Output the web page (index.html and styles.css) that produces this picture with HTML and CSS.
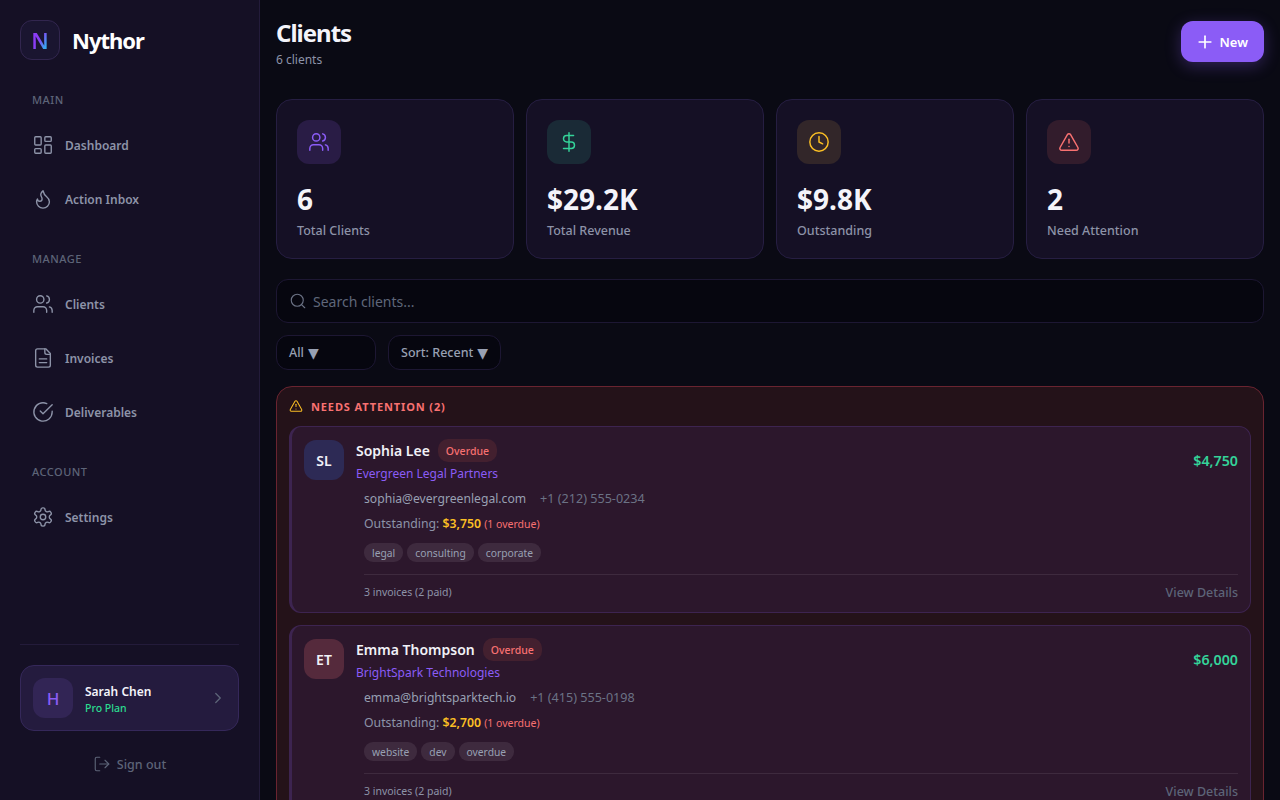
FILE: index.html
```html
<!DOCTYPE html>
<html lang="en">
<head>
    <meta charset="UTF-8">
    <meta name="viewport" content="width=device-width, initial-scale=1.0">
    <title>Nythor - Clients</title>
    <link rel="stylesheet" href="styles.css">
</head>
<body>
    <div class="app">
        <aside class="sidebar">
            <div class="brand">
                <div class="brand-mark"><span class="brand-letter">N</span></div>
                <span class="brand-name">Nythor</span>
            </div>

            <nav class="nav">
                <div class="nav-label">MAIN</div>
                <a href="#" class="nav-item">
                    <svg class="nav-icon" viewBox="0 0 24 24"><rect x="3" y="3" width="7" height="9" rx="1"/><rect x="14" y="3" width="7" height="5" rx="1"/><rect x="14" y="12" width="7" height="9" rx="1"/><rect x="3" y="16" width="7" height="5" rx="1"/></svg>
                    Dashboard
                </a>
                <a href="#" class="nav-item">
                    <svg class="nav-icon" viewBox="0 0 24 24"><path d="M8.5 14.5A2.5 2.5 0 0 0 11 12c0-1.38-.5-2-1-3-1.072-2.143-.224-4.054 2-6 .5 2.5 2 4.9 4 6.5 2 1.6 3 3.5 3 5.5a7 7 0 1 1-14 0c0-1.153.433-2.294 1-3a2.5 2.5 0 0 0 2.5 2.5z"/></svg>
                    Action Inbox
                </a>

                <div class="nav-label">MANAGE</div>
                <a href="#" class="nav-item">
                    <svg class="nav-icon" viewBox="0 0 24 24"><path d="M16 21v-2a4 4 0 0 0-4-4H6a4 4 0 0 0-4 4v2"/><circle cx="9" cy="7" r="4"/><path d="M22 21v-2a4 4 0 0 0-3-3.87"/><path d="M16 3.13a4 4 0 0 1 0 7.75"/></svg>
                    Clients
                </a>
                <a href="#" class="nav-item">
                    <svg class="nav-icon" viewBox="0 0 24 24"><path d="M15 2H6a2 2 0 0 0-2 2v16a2 2 0 0 0 2 2h12a2 2 0 0 0 2-2V7Z"/><path d="M14 2v4a2 2 0 0 0 2 2h4"/><path d="M16 13H8"/><path d="M16 17H8"/></svg>
                    Invoices
                </a>
                <a href="#" class="nav-item">
                    <svg class="nav-icon" viewBox="0 0 24 24"><path d="M22 11.08V12a10 10 0 1 1-5.93-9.14"/><path d="m9 11 3 3L22 4"/></svg>
                    Deliverables
                </a>

                <div class="nav-label">ACCOUNT</div>
                <a href="#" class="nav-item">
                    <svg class="nav-icon" viewBox="0 0 24 24"><path d="M12.22 2h-.44a2 2 0 0 0-2 2v.18a2 2 0 0 1-1 1.73l-.43.25a2 2 0 0 1-2 0l-.15-.08a2 2 0 0 0-2.73.73l-.22.38a2 2 0 0 0 .73 2.73l.15.1a2 2 0 0 1 1 1.72v.51a2 2 0 0 1-1 1.74l-.15.09a2 2 0 0 0-.73 2.73l.22.38a2 2 0 0 0 2.73.73l.15-.08a2 2 0 0 1 2 0l.43.25a2 2 0 0 1 1 1.73V20a2 2 0 0 0 2 2h.44a2 2 0 0 0 2-2v-.18a2 2 0 0 1 1-1.73l.43-.25a2 2 0 0 1 2 0l.15.08a2 2 0 0 0 2.73-.73l.22-.39a2 2 0 0 0-.73-2.73l-.15-.08a2 2 0 0 1-1-1.74v-.5a2 2 0 0 1 1-1.74l.15-.09a2 2 0 0 0 .73-2.73l-.22-.38a2 2 0 0 0-2.73-.73l-.15.08a2 2 0 0 1-2 0l-.43-.25a2 2 0 0 1-1-1.73V4a2 2 0 0 0-2-2z"/><circle cx="12" cy="12" r="3"/></svg>
                    Settings
                </a>
            </nav>

            <div class="sidebar-footer">
                <div class="user-card">
                    <div class="user-avatar">H</div>
                    <div class="user-info">
                        <div class="user-name">Sarah Chen</div>
                        <div class="user-plan">Pro Plan</div>
                    </div>
                    <svg class="user-chevron" viewBox="0 0 24 24"><path d="m9 18 6-6-6-6"/></svg>
                </div>
                <a href="#" class="sign-out">
                    <svg class="sign-out-icon" viewBox="0 0 24 24"><path d="M9 21H5a2 2 0 0 1-2-2V5a2 2 0 0 1 2-2h4"/><path d="m16 17 5-5-5-5"/><path d="M21 12H9"/></svg>
                    Sign out
                </a>
            </div>
        </aside>

        <main class="main">
            <div class="page-header">
                <div>
                    <h1>Clients</h1>
                    <p class="page-count">6 clients</p>
                </div>
                <button class="new-btn">
                    <svg class="new-icon" viewBox="0 0 24 24"><path d="M5 12h14"/><path d="M12 5v14"/></svg>
                    New
                </button>
            </div>

            <div class="stats">
                <div class="stat-card">
                    <div class="stat-icon purple"><svg viewBox="0 0 24 24"><path d="M16 21v-2a4 4 0 0 0-4-4H6a4 4 0 0 0-4 4v2"/><circle cx="9" cy="7" r="4"/><path d="M22 21v-2a4 4 0 0 0-3-3.87"/><path d="M16 3.13a4 4 0 0 1 0 7.75"/></svg></div>
                    <div class="stat-value">6</div>
                    <div class="stat-label">Total Clients</div>
                </div>
                <div class="stat-card">
                    <div class="stat-icon green"><svg viewBox="0 0 24 24"><path d="M12 2v20"/><path d="M17 5H9.5a3.5 3.5 0 0 0 0 7h5a3.5 3.5 0 0 1 0 7H6"/></svg></div>
                    <div class="stat-value">$29.2K</div>
                    <div class="stat-label">Total Revenue</div>
                </div>
                <div class="stat-card">
                    <div class="stat-icon amber"><svg viewBox="0 0 24 24"><circle cx="12" cy="12" r="10"/><path d="M12 6v6l4 2"/></svg></div>
                    <div class="stat-value">$9.8K</div>
                    <div class="stat-label">Outstanding</div>
                </div>
                <div class="stat-card">
                    <div class="stat-icon red"><svg viewBox="0 0 24 24"><path d="m21.73 18-8-14a2 2 0 0 0-3.48 0l-8 14A2 2 0 0 0 4 21h16a2 2 0 0 0 1.73-3"/><path d="M12 9v4"/><path d="M12 17h.01"/></svg></div>
                    <div class="stat-value">2</div>
                    <div class="stat-label">Need Attention</div>
                </div>
            </div>

            <div class="search">
                <svg class="search-icon" viewBox="0 0 24 24"><circle cx="11" cy="11" r="8"/><path d="m21 21-4.3-4.3"/></svg>
                <span class="search-text">Search clients...</span>
            </div>

            <div class="filters">
                <div class="filter filter-all">All <span class="caret">▼</span></div>
                <div class="filter">Sort: Recent <span class="caret">▼</span></div>
            </div>

            <section class="attention">
                <div class="attention-title">
                    <svg class="attention-icon" viewBox="0 0 24 24"><path d="m21.73 18-8-14a2 2 0 0 0-3.48 0l-8 14A2 2 0 0 0 4 21h16a2 2 0 0 0 1.73-3"/><path d="M12 9v4"/><path d="M12 17h.01"/></svg>
                    NEEDS ATTENTION (2)
                </div>

                <article class="client-card">
                    <div class="client-top">
                        <div class="client-avatar indigo">SL</div>
                        <div class="client-head">
                            <div class="client-name-row">
                                <span class="client-name">Sophia Lee</span>
                                <span class="badge">Overdue</span>
                            </div>
                            <div class="client-company">Evergreen Legal Partners</div>
                        </div>
                        <div class="client-total">$4,750</div>
                    </div>
                    <div class="client-body">
                        <div class="contact-row">
                            <span class="contact-email">sophia@evergreenlegal.com</span>
                            <span class="contact-phone">+1 (212) 555-0234</span>
                        </div>
                        <div class="outstanding-row">Outstanding: <strong>$3,750</strong> <span class="overdue-note">(1 overdue)</span></div>
                        <div class="tags">
                            <span class="tag">legal</span>
                            <span class="tag">consulting</span>
                            <span class="tag">corporate</span>
                        </div>
                        <div class="client-foot">
                            <span class="invoice-count">3 invoices (2 paid)</span>
                            <a href="#" class="view-link">View Details</a>
                        </div>
                    </div>
                </article>

                <article class="client-card">
                    <div class="client-top">
                        <div class="client-avatar rose">ET</div>
                        <div class="client-head">
                            <div class="client-name-row">
                                <span class="client-name">Emma Thompson</span>
                                <span class="badge">Overdue</span>
                            </div>
                            <div class="client-company">BrightSpark Technologies</div>
                        </div>
                        <div class="client-total">$6,000</div>
                    </div>
                    <div class="client-body">
                        <div class="contact-row">
                            <span class="contact-email">emma@brightsparktech.io</span>
                            <span class="contact-phone">+1 (415) 555-0198</span>
                        </div>
                        <div class="outstanding-row">Outstanding: <strong>$2,700</strong> <span class="overdue-note">(1 overdue)</span></div>
                        <div class="tags">
                            <span class="tag">website</span>
                            <span class="tag">dev</span>
                            <span class="tag">overdue</span>
                        </div>
                        <div class="client-foot">
                            <span class="invoice-count">3 invoices (2 paid)</span>
                            <a href="#" class="view-link">View Details</a>
                        </div>
                    </div>
                </article>
            </section>
        </main>
    </div>
</body>
</html>
```

FILE: styles.css
```css
* {
    box-sizing: border-box;
}
html, body {
    height: 100%;
}
body {
    font-family: "Noto Sans", Arial, sans-serif;
    margin: 0;
    background-color: #0a0a14;
    color: #f1f1f7;
    overflow: hidden;
}
svg {
    fill: none;
    stroke: currentColor;
    stroke-width: 2;
    stroke-linecap: round;
    stroke-linejoin: round;
}
a {
    text-decoration: none;
}
.app {
    display: flex;
    height: 800px;
}

/* sidebar */
.sidebar {
    width: 260px;
    flex-shrink: 0;
    display: flex;
    flex-direction: column;
    padding: 20px 20px 0;
    background-color: #151025;
    border-right: 1px solid #231b3a;
}
.brand {
    display: flex;
    align-items: center;
    gap: 12px;
}
.brand-mark {
    width: 40px;
    height: 40px;
    display: flex;
    align-items: center;
    justify-content: center;
    background-color: #1a1530;
    border: 1px solid #32264f;
    border-radius: 12px;
}
.brand-letter {
    font-size: 22px;
    font-weight: 600;
    line-height: 1;
    background: linear-gradient(120deg, #8b3cf6 45%, #38a8f0 80%);
    -webkit-background-clip: text;
    background-clip: text;
    color: transparent;
}
.brand-name {
    font-size: 22px;
    font-weight: 700;
    letter-spacing: -1px;
    color: #fff;
}
.nav {
    margin-top: 32px;
}
.nav-label {
    padding-left: 12px;
    font-size: 11px;
    line-height: 15px;
    letter-spacing: 0.5px;
    font-weight: 500;
    color: #5d6478;
}
.nav-item + .nav-label {
    margin-top: 25px;
}
.nav-label + .nav-item {
    margin-top: 11px;
}
.nav-item {
    display: flex;
    align-items: center;
    gap: 11px;
    height: 54px;
    padding-left: 12px;
    font-size: 12px;
    font-weight: 600;
    color: #8d93a8;
}
.nav-icon {
    width: 22px;
    height: 22px;
    stroke-width: 1.5;
    flex-shrink: 0;
}
.sidebar-footer {
    margin-top: auto;
    padding-top: 20px;
    border-top: 1px solid #231b3a;
}
.user-card {
    height: 66px;
    display: flex;
    align-items: center;
    padding: 0 11px 0 12px;
    background-color: #241b3e;
    border: 1px solid #35285a;
    border-radius: 14px;
}
.user-avatar {
    width: 40px;
    height: 40px;
    display: flex;
    align-items: center;
    justify-content: center;
    background-color: #322555;
    border-radius: 12px;
    font-size: 17px;
    font-weight: 500;
    color: #8b5cf6;
}
.user-info {
    margin-left: 12px;
    padding-top: 2px;
    flex: 1;
}
.user-name {
    font-size: 12px;
    line-height: 17px;
    font-weight: 600;
    color: #f4f4fa;
}
.user-plan {
    margin-top: 1px;
    font-size: 10.5px;
    line-height: 15px;
    font-weight: 500;
    color: #2bdc90;
}
.user-chevron {
    width: 18px;
    height: 18px;
    stroke-width: 1.75;
    color: #5d6478;
}
.sign-out {
    display: flex;
    align-items: center;
    justify-content: center;
    gap: 6px;
    height: 66px;
    margin-bottom: 3px;
    font-size: 12.5px;
    font-weight: 500;
    color: #5d6478;
}
.sign-out-icon {
    width: 18px;
    height: 18px;
    stroke-width: 1.5;
}

/* main */
.main {
    flex: 1;
    min-width: 0;
    padding: 16px 16px 0;
    overflow: hidden;
}
.page-header {
    display: flex;
    justify-content: space-between;
    align-items: flex-start;
    height: 83px;
}
h1 {
    margin: 0;
    font-size: 24px;
    line-height: 34px;
    font-weight: 700;
    letter-spacing: -1px;
    color: #f4f4fa;
}
.page-count {
    margin: 0;
    font-size: 12px;
    line-height: 19px;
    color: #8d93a8;
}
.new-btn {
    margin-top: 5px;
    height: 41px;
    display: flex;
    align-items: center;
    gap: 5px;
    padding: 0 16px 0 14px;
    background-color: #8b5cf6;
    border: none;
    border-radius: 12px;
    font-family: inherit;
    font-size: 13px;
    font-weight: 600;
    color: #fff;
    box-shadow: 0 4px 16px rgba(139, 92, 246, 0.3);
}
.new-icon {
    width: 20px;
    height: 20px;
}
.stats {
    display: grid;
    grid-template-columns: repeat(4, 1fr);
    gap: 12px;
}
.stat-card {
    height: 160px;
    padding: 20px;
    background-color: #151025;
    border: 1px solid #261e42;
    border-radius: 16px;
}
.stat-icon {
    width: 44px;
    height: 44px;
    display: flex;
    align-items: center;
    justify-content: center;
    border-radius: 12px;
}
.stat-icon svg {
    width: 22px;
    height: 22px;
    stroke-width: 1.6;
}
.stat-icon.purple {
    background-color: #291c45;
    color: #8b5cf6;
}
.stat-icon.green {
    background-color: #1a2a36;
    color: #34d399;
}
.stat-icon.amber {
    background-color: #322629;
    color: #fbbf24;
}
.stat-icon.red {
    background-color: #321c2c;
    color: #f87171;
}
.stat-value {
    margin-top: 16px;
    font-size: 28px;
    line-height: 38px;
    font-weight: 700;
    color: #f4f4fa;
}
.stat-label {
    margin-top: 4px;
    font-size: 12.5px;
    line-height: 17px;
    font-weight: 500;
    color: #8d93a8;
}
.search {
    margin-top: 20px;
    height: 44px;
    display: flex;
    align-items: center;
    gap: 6px;
    padding: 0 12px;
    background-color: #06060f;
    border: 1px solid #1d1733;
    border-radius: 12px;
}
.search-icon {
    width: 18px;
    height: 18px;
    stroke-width: 1.5;
    color: #6b7285;
}
.search-text {
    font-size: 14px;
    color: #5f667a;
}
.filters {
    display: flex;
    gap: 12px;
    margin-top: 12px;
}
.filter {
    height: 35px;
    display: flex;
    align-items: center;
    gap: 4px;
    padding: 0 12px;
    background-color: #06060f;
    border: 1px solid #1d1733;
    border-radius: 12px;
    font-size: 12.5px;
    font-weight: 500;
    color: #98a0b3;
}
.filter-all {
    width: 100px;
}
.caret {
    font-family: "DejaVu Sans", sans-serif;
    font-size: 14px;
}
.attention {
    margin-top: 16px;
    padding: 11px 12px 12px;
    background-color: #241219;
    border: 1px solid #6a2430;
    border-radius: 16px;
}
.attention-title {
    display: flex;
    align-items: center;
    gap: 8px;
    height: 16px;
    margin-bottom: 12px;
    font-size: 11px;
    font-weight: 700;
    letter-spacing: 0.08em;
    color: #f87171;
}
.attention-icon {
    width: 14px;
    height: 14px;
    stroke-width: 1.75;
    color: #fbbf24;
}
.client-card {
    height: 187px;
    margin-bottom: 12px;
    padding: 13px 12px 0 12px;
    background-color: #2c172c;
    border: 1px solid #3d2450;
    border-left-width: 3px;
    border-radius: 12px;
}
.client-top {
    display: flex;
    align-items: flex-start;
}
.client-avatar {
    width: 40px;
    height: 40px;
    display: flex;
    align-items: center;
    justify-content: center;
    border-radius: 12px;
    font-size: 14px;
    font-weight: 600;
    color: #f1f1f7;
}
.client-avatar.indigo {
    background-color: #2d2a55;
}
.client-avatar.rose {
    background-color: #552a3c;
}
.client-head {
    margin-left: 12px;
    flex: 1;
}
.client-name-row {
    display: flex;
    align-items: center;
    gap: 8px;
    margin-top: -1px;
}
.client-name {
    font-size: 14px;
    font-weight: 600;
    color: #f1f1f7;
}
.badge {
    height: 23px;
    display: flex;
    align-items: center;
    padding: 0 8px;
    background-color: #43202f;
    border-radius: 10px;
    font-size: 10.5px;
    font-weight: 500;
    color: #f87171;
}
.client-company {
    margin-top: 3px;
    font-size: 12px;
    line-height: 17px;
    color: #8b5cf6;
}
.client-total {
    margin-top: 11px;
    font-size: 14.25px;
    font-weight: 600;
    color: #34d399;
}
.client-body {
    padding-left: 60px;
}
.contact-row {
    display: flex;
    gap: 14px;
    margin-top: 8px;
    font-size: 12px;
    line-height: 17px;
}
.contact-email {
    font-size: 12.15px;
    color: #98a0b3;
}
.contact-phone {
    font-size: 12.6px;
    color: #6b7285;
}
.outstanding-row {
    margin-top: 8px;
    font-size: 12.25px;
    line-height: 17px;
    color: #8d93a8;
}
.outstanding-row strong {
    font-weight: 600;
    color: #fbbf24;
}
.overdue-note {
    font-size: 10.5px;
    color: #f87171;
}
.tags {
    display: flex;
    gap: 4px;
    margin-top: 10px;
}
.tag {
    height: 19px;
    display: flex;
    align-items: center;
    padding: 0 8px;
    background-color: #3e2a3e;
    border-radius: 9px;
    font-size: 10.3px;
    color: #98a0b3;
}
.client-foot {
    display: flex;
    justify-content: space-between;
    align-items: center;
    margin-top: 12px;
    border-top: 1px solid #3e2a3e;
    height: 35px;
}
.invoice-count {
    font-size: 10.5px;
    color: #8d93a8;
}
.view-link {
    font-size: 12.5px;
    font-weight: 500;
    color: #5d6478;
}
```
